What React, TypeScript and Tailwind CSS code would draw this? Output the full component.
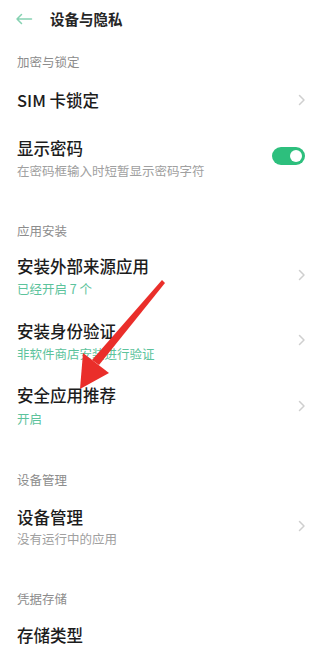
import React from "react";

const font = { fontFamily: '"Noto Sans CJK SC", "Noto Sans", sans-serif' };

const Chevron = ({ className }: { className: string }) => (
  <svg
    width="8"
    height="12"
    viewBox="0 0 8 12"
    className={`absolute right-[5px] ${className}`}
    fill="none"
    stroke="#cfcfcf"
    strokeWidth="1.5"
    strokeLinecap="round"
    strokeLinejoin="round"
  >
    <path d="M1.5 1.5 L6 6 L1.5 10.5" />
  </svg>
);

const App = () => {
  return (
    <div className="relative w-[328px] h-[663px] bg-white overflow-hidden" style={font}>
      {/* header */}
      <div className="h-[38px] flex items-center pl-[15px]">
        <svg width="18" height="12" viewBox="0 0 18 12" fill="none" stroke="#86d2b2" strokeWidth="1.5" strokeLinecap="round" strokeLinejoin="round">
          <path d="M16.5 6 H2 M6.5 1.5 L2 6 L6.5 10.5" />
        </svg>
        <span className="ml-[17px] text-[14.5px] font-bold text-[#262626] leading-none">设备与隐私</span>
      </div>

      <div className="px-[17px]">
        <div className="mt-[16px] text-[12.5px] leading-[16px] text-[#8c8c8c]">加密与锁定</div>

        <div className="relative">
          <div className="mt-[19px] text-[16.5px] leading-[22px] font-medium text-[#1c1c1c]">SIM 卡锁定</div>
          <Chevron className="top-[5px]" />
        </div>

        <div className="relative">
          <div className="mt-[26px] text-[16.5px] leading-[22px] font-medium text-[#1c1c1c]">显示密码</div>
          <div className="mt-[4px] text-[12.5px] leading-[16px] text-[#a0a0a0]">在密码框输入时短暂显示密码字符</div>
          <div className="absolute right-[6px] top-[10px] w-[33px] h-[18px] rounded-full bg-[#2dbf7d] flex items-center justify-end pr-[3px]">
            <div className="w-[12px] h-[12px] rounded-full bg-white" />
          </div>
        </div>

        <div className="mt-[44px] text-[12.5px] leading-[16px] text-[#8c8c8c]">应用安装</div>

        <div className="relative">
          <div className="mt-[16px] text-[16.5px] leading-[22px] font-medium text-[#1c1c1c]">安装外部来源应用</div>
          <div className="mt-[4px] text-[12.5px] leading-[16px] text-[#5cc39c]">已经开启 7 个</div>
          <Chevron className="top-[14px]" />
        </div>

        <div className="relative">
          <div className="mt-[23px] text-[16.5px] leading-[22px] font-medium text-[#1c1c1c]">安装身份验证</div>
          <div className="mt-[4px] text-[12.5px] leading-[16px] text-[#5cc39c]">非软件商店安装进行验证</div>
          <Chevron className="top-[14px]" />
        </div>

        <div className="relative">
          <div className="mt-[22px] text-[16.5px] leading-[22px] font-medium text-[#1c1c1c]">安全应用推荐</div>
          <div className="mt-[5px] text-[12.5px] leading-[16px] text-[#5cc39c]">开启</div>
          <Chevron className="top-[16px]" />
        </div>

        <div className="mt-[45px] text-[12.5px] leading-[16px] text-[#8c8c8c]">设备管理</div>

        <div className="relative">
          <div className="mt-[18px] text-[16.5px] leading-[22px] font-medium text-[#1c1c1c]">设备管理</div>
          <div className="mt-[3px] text-[12.5px] leading-[16px] text-[#a0a0a0]">没有运行中的应用</div>
          <Chevron className="top-[14px]" />
        </div>

        <div className="mt-[44px] text-[12.5px] leading-[16px] text-[#8c8c8c]">凭据存储</div>

        <div className="mt-[17px] text-[16.5px] leading-[22px] font-medium text-[#1c1c1c]">存储类型</div>
      </div>

      {/* red annotation arrow */}
      <svg className="absolute left-0 top-0 pointer-events-none" width="328" height="663" viewBox="0 0 328 663">
        <polygon points="162,280 165,283 99,365 92,360" fill="#ea2e2a" />
        <polygon points="80,389 83,353 109,373" fill="#ea2e2a" />
      </svg>
    </div>
  );
};

export default App;
